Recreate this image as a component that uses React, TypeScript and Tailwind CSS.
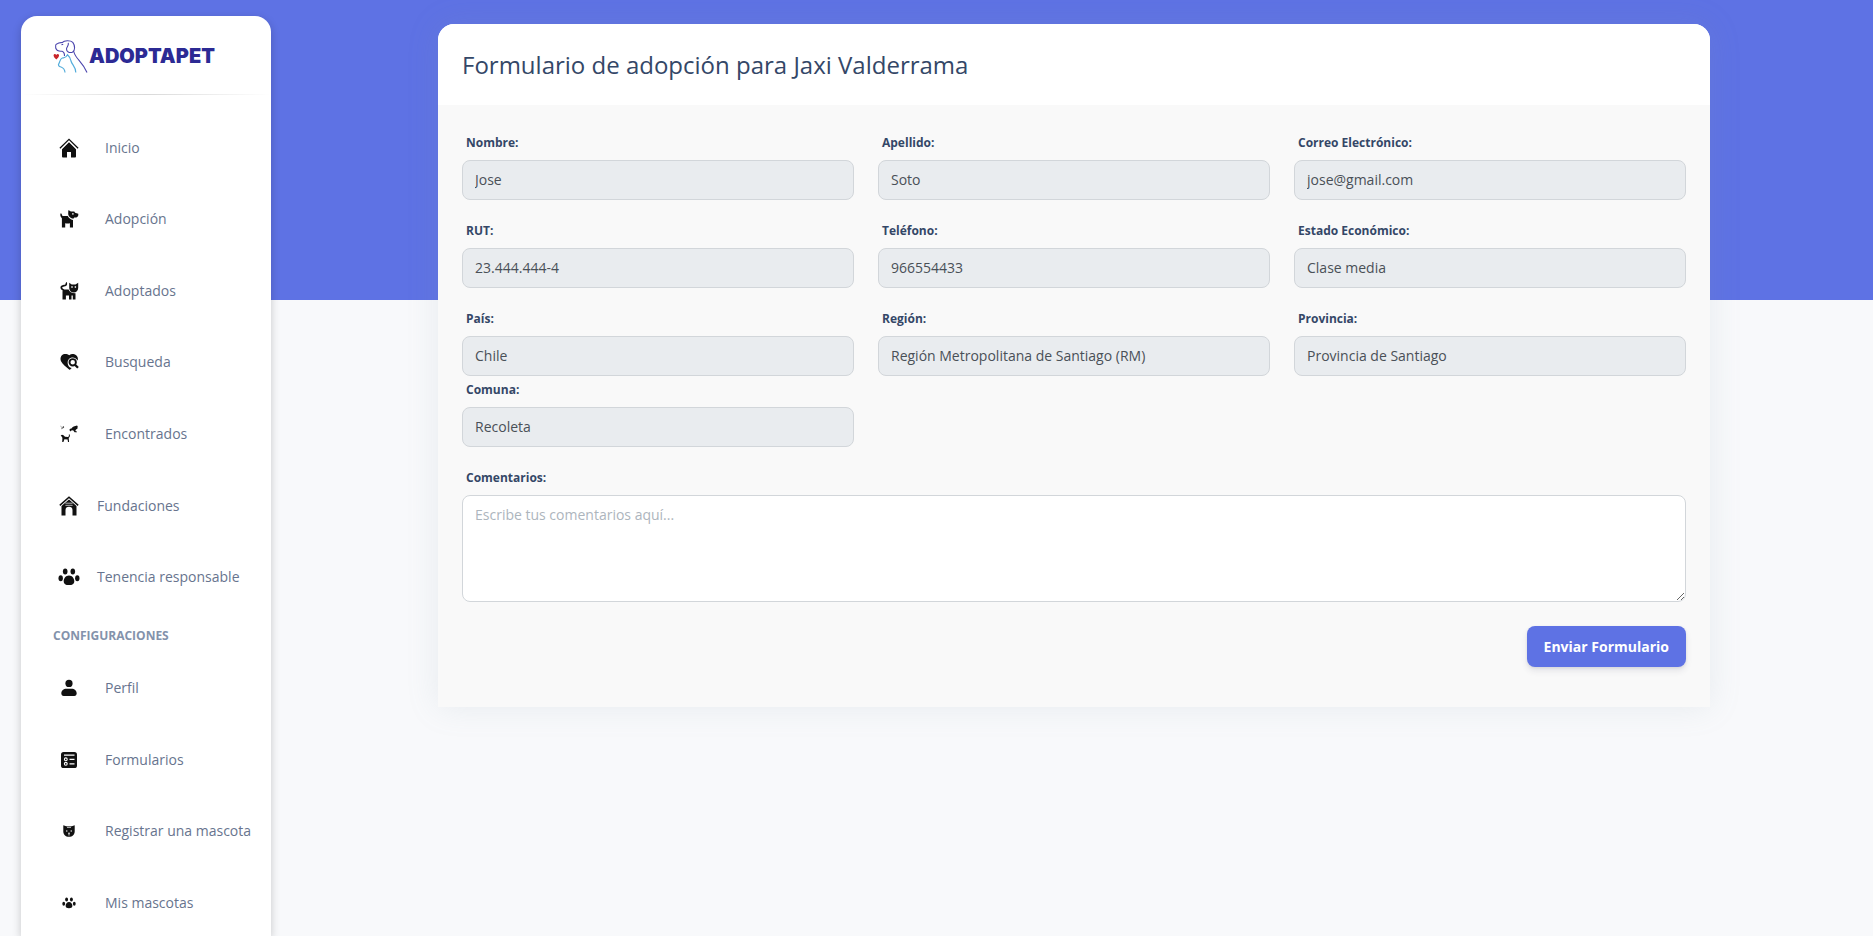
import type { ReactNode } from "react";

function HomeIcon() {
  return (
    <svg width="20" height="20" viewBox="0 0 20 20" fill="none" aria-hidden="true">
      <path d="M.9 10.300 10 1.300l9.100 9" stroke="#111" strokeWidth="1.300" />
      <path d="M10 4.200 3 11.200v7.400c0 .6.300.9.900.9H8V14h4v5.500h4.100c.6 0 .9-.3.9-.9v-7.400z" fill="#111" />
    </svg>
  );
}

function DogIcon() {
  return (
    <svg width="19" height="18" viewBox="0 0 19 18" fill="#111" aria-hidden="true">
      <path d="M.4 3.500c.900-.2 1.400.3 1.500 1.200.2.900.6 1.300 1.400 1.300h4.500c1 2.200 2.800 3.500 5.200 3.900v7.600H9.900v-4.300c-1.300.4-3 .4-4.700 0v4.300H1.900V8.200C.7 7.300 0 5.500.4 3.500z" />
      <path d="M8.300.3c1.200.1 1.800.6 2.300 1.300h3.100c.7 0 1 .5 1.300 1.200l3.300 1c.3 1.900-.6 3.700-2.500 3.800h-1.600l-.9 1.200C10.700 8.500 8.600 6.800 8.200 4.300z" />
      <circle cx="12.900" cy="3.900" r=".8" fill="#fff" />
    </svg>
  );
}

function CatIcon() {
  return (
    <svg width="19" height="18" viewBox="0 0 19 18" fill="none" aria-hidden="true">
      <path d="M7 .9c-.7 0-.6 1-.9 1.800C5.600 4.200 1.300 3 1.300 5.600c0 1.600 1.400 2.200 2.700 2.600" stroke="#111" strokeWidth="1.700" />
      <path
        d="M2.500 9.500c0-1.200.8-2 2-2h4.100c.8 2.500 3.200 3.900 6.900 3.800v6.200h-2.700v-4h-1.300v4H9v-4H5.900v4H2.500z"
        fill="#111"
      />
      <path d="M9.200.7 11.700 2.500h3.800L18.200.7v5.300c0 2.700-2 4.500-4.500 4.500S9.200 8.700 9.200 6z" fill="#111" />
      <path d="M11.300 4.300h1.400v1.400h-1.400zM14.700 4.300h1.400v1.400h-1.400z" fill="#fff" />
    </svg>
  );
}

function HeartSearchIcon() {
  return (
    <svg width="19" height="18" viewBox="0 0 19 18" fill="none" aria-hidden="true">
      <path
        d="M9.300 2.200C7.600.9 5.200.6 3.400 1.200 1 2.200-.2 5.200.9 8c1.300 3.300 5.300 5.900 8.200 8.600.6.500 1.200.2 1.600-.5l1-1C6.800 14 6 6.500 11 4.800c2.500-.8 5 .2 6.600 2.600 1-2.700-.5-5.400-3.200-6.100-2-.5-3.700-.3-5.100.9z"
        fill="#111"
      />
      <circle cx="12.700" cy="9.300" r="3.200" stroke="#111" strokeWidth="1.900" />
      <path d="m15 11.700 3 3.100" stroke="#111" strokeWidth="2.200" />
    </svg>
  );
}

function FoundIcon() {
  return (
    <svg width="18" height="18" viewBox="0 0 18 18" fill="#111" aria-hidden="true">
      <path d="M.5 1.200 2 2.500M1 3.800l2-.6M3.500 1l-1 2 1.600-.6" stroke="#555" strokeWidth=".6" />
      <path d="M9.300 5c.6-1.200 1.500-1.300 2.200-1.400 1-1.400 1.800-2.300 3-2.300L17 .5l.7.8-.3 2.400-1.400.7-.7 1.500 1.500.6.200.7h-2.400l-1.500-1.900-1.800.1-.6 1.100z" />
      <path d="M.7 10.400 2 9.800l1.500.5L5 11.800l3 .1c1.300-.5.900-1.600.8-2.400l.6-.2c.6.800.8 2-.1 3l-.6.7.4 3.900H8l-.4-2.400-3.200-.2-1 2.800H2.200l.2-4L2 12z" />
    </svg>
  );
}

function KennelIcon() {
  return (
    <svg width="20" height="20" viewBox="0 0 20 20" fill="none" aria-hidden="true">
      <path d="M.8 9.400 10 1.300l9.200 8.100" stroke="#111" strokeWidth="1.500" />
      <path d="M10 3.500 2.500 9.900V19.500h4v-5.200a3.500 3.500 0 0 1 7 0v5.200h4V9.900z" fill="#111" />
      <path d="M6.400 7.200h7.200M6.400 9.300h7.200" stroke="#fff" strokeWidth=".7" />
    </svg>
  );
}

function PawIcon({ size }: { size: number }) {
  return (
    <svg width={size} height={size} viewBox="0 0 22 22" fill="#111" aria-hidden="true">
      <ellipse cx="7.200" cy="5.500" rx="2.300" ry="3" />
      <ellipse cx="14.800" cy="5.500" rx="2.300" ry="3" />
      <ellipse cx="2.700" cy="12.200" rx="2.200" ry="3" />
      <ellipse cx="19.300" cy="12.200" rx="2.200" ry="3" />
      <path d="M11 9.400c3.200 0 5.300 3 5.300 5.800 0 2.900-2.300 3.900-5.300 3.900s-5.300-1-5.300-3.900c0-2.800 2.100-5.800 5.300-5.800z" />
    </svg>
  );
}

function PersonIcon() {
  return (
    <svg width="18" height="18" viewBox="0 0 18 18" fill="#111" aria-hidden="true">
      <circle cx="9" cy="4.400" r="3.600" />
      <path d="M6.500 9.700h5c3 0 5.200 2 5.200 4.600 0 1.600-.9 2.600-2.400 2.600H3.700c-1.500 0-2.400-1-2.400-2.600 0-2.600 2.200-4.600 5.200-4.600z" />
    </svg>
  );
}

function FormIcon() {
  return (
    <svg width="18" height="18" viewBox="0 0 18 18" fill="none" aria-hidden="true">
      <rect x="1" y="1" width="16" height="16" rx="2.600" fill="#111" />
      <path d="M4 4.200h10.500M9.500 8.300h5M9.500 12.800h5" stroke="#fff" strokeWidth="1.200" />
      <circle cx="5.800" cy="8.300" r="1.400" stroke="#fff" strokeWidth="1.100" />
      <circle cx="5.800" cy="12.800" r="1.400" stroke="#fff" strokeWidth="1.100" />
    </svg>
  );
}

function PetFaceIcon() {
  return (
    <svg width="12" height="12" viewBox="0 0 12 12" fill="none" aria-hidden="true">
      <path d="M.3.300 3.200 1.300h5.600L11.700.300V6.500C11.700 9.500 9.500 11.800 6 11.800S.3 9.500.3 6.500z" fill="#111" />
      <path d="M4 2.300h4" stroke="#fff" strokeWidth=".8" />
      <circle cx="3.800" cy="6" r=".7" fill="#fff" />
      <circle cx="8.200" cy="6" r=".7" fill="#fff" />
      <path d="M4.900 7.700h2.200L6.400 9v1.600h-.8V9z" fill="#fff" />
    </svg>
  );
}

function LogoMark() {
  return (
    <svg width="36" height="34" viewBox="0 0 36 34" fill="none" aria-hidden="true">
      <path
        d="M11.500 17c.1-3.300-.6-4.200-2.500-4.800-3 .3-5.400-.8-6.200-2.900-.2-1.800-.8-3.600.8-4.200C5 3.800 7 3.600 9.500 3.400c1.500-2 8-2.300 10.300 0 2.200 3 2.700 8.300-.4 9.900-3.300.8-5.900-.6-5.900-3.400.1-2 2.500-3.200 1.800-6M20.800 12.500c1.500 7.500 8.700 10 13.200 21"
        stroke="#4b45ad"
        strokeWidth="1.100"
      />
      <path d="M8.500 5.800 10.200 5.200" stroke="#4b45ad" strokeWidth="1.100" />
      <path
        d="M12 33.500c-.2-3-1-4.500-4-5.500-2.200-.6-3.300-2-2-3.500 1-2 .8-4.500 3.300-5.500 2-.4 3.500.4 5.200-3.200 1.800 1.600 3 3.200 3.500 6.200 1 4 5 6 4.800 11.500"
        stroke="#55addb"
        strokeWidth="1.200"
      />
      <path d="M3.300 20.500C1.500 18.800.3 17.500.6 16c.4-1.300 2-1.300 2.700 0 .7-1.300 2.300-1.300 2.700 0 .3 1.500-.9 2.800-2.700 4.500z" fill="#c9252b" />
    </svg>
  );
}

type Item = { label: string; icon: ReactNode; tight?: boolean };

const mainItems: Item[] = [
  { label: "Inicio", icon: <HomeIcon /> },
  { label: "Adopción", icon: <DogIcon /> },
  { label: "Adoptados", icon: <CatIcon /> },
  { label: "Busqueda", icon: <HeartSearchIcon /> },
  { label: "Encontrados", icon: <FoundIcon /> },
  { label: "Fundaciones", icon: <KennelIcon />, tight: true },
  { label: "Tenencia responsable", icon: <PawIcon size={22} />, tight: true },
];

const settingsItems: Item[] = [
  { label: "Perfil", icon: <PersonIcon /> },
  { label: "Formularios", icon: <FormIcon /> },
  { label: "Registrar una mascota", icon: <PetFaceIcon /> },
  { label: "Mis mascotas", icon: <PawIcon size={14} /> },
];

function NavItem({ label, icon, tight }: Item) {
  return (
    <li className="flex">
      <a
        href="#"
        className={`flex flex-1 items-center whitespace-nowrap pl-8 text-sm text-[#67748e] ${tight ? "gap-3" : "gap-5"}`}
      >
        <span className="flex w-8 shrink-0 justify-center">{icon}</span>
        {label}
      </a>
    </li>
  );
}

function Field({ id, label, value }: { id: string; label: string; value: string }) {
  return (
    <div>
      <label htmlFor={id} className="mb-1 ml-1 block text-xs leading-[27px] font-bold text-[#344767]">
        {label}
      </label>
      <input
        id={id}
        readOnly
        defaultValue={value}
        className="block h-10 w-full rounded-lg border border-[#d2d6da] bg-[#e9ecef] px-3 pb-0.5 text-sm text-[#495057] outline-none"
      />
    </div>
  );
}

export default function App() {
  return (
    <div className="flex min-h-screen items-start bg-[linear-gradient(to_bottom,#5e72e4_300px,#f8f9fb_300px)] font-['Open_Sans',sans-serif]">
      <aside className="sticky top-4 mt-4 mr-1 ml-[21px] h-[calc(100vh-16px)] w-[250px] shrink-0 overflow-hidden rounded-t-2xl bg-white shadow-[0_3px_10px_rgba(0,0,0,0.2)]">
        <a href="#" className="flex h-[78px] items-center pt-0.5 pl-8">
          <LogoMark />
          <span className="font-['Inter',sans-serif] text-xl font-black text-[#2c2a94]">ADOPTAPET</span>
        </a>
        <hr className="h-px border-0 bg-linear-to-r from-transparent via-black/15 to-transparent" />
        <nav className="pt-[17px]">
          <ul className="grid h-[501px] grid-rows-7">
            {mainItems.map((item) => (
              <NavItem key={item.label} {...item} />
            ))}
          </ul>
          <h6 className="mt-[13px] mb-1.5 pl-8 text-xs leading-5 font-bold text-[#8392ab] uppercase">Configuraciones</h6>
          <ul className="grid h-[287px] grid-rows-4">
            {settingsItems.map((item) => (
              <NavItem key={item.label} {...item} />
            ))}
          </ul>
        </nav>
      </aside>

      <main className="flex-1 px-4 py-6">
        <section className="mx-auto max-w-[1272px] rounded-t-2xl bg-[#f9f9f9] shadow-[0_0_32px_rgba(136,152,170,0.15)]">
          <header className="rounded-t-2xl bg-white p-6">
            <h1 className="text-2xl leading-[33px] font-medium text-[#344767]">
              Formulario de adopción para Jaxi Valderrama
            </h1>
          </header>
          <form className="px-6 pt-6 pb-10" onSubmit={(e) => e.preventDefault()}>
            <div className="grid grid-cols-3 gap-x-6 gap-y-[17px]">
              <Field id="nombre" label="Nombre:" value="Jose" />
              <Field id="apellido" label="Apellido:" value="Soto" />
              <Field id="correo" label="Correo Electrónico:" value="jose@gmail.com" />
              <Field id="rut" label="RUT:" value="23.444.444-4" />
              <Field id="telefono" label="Teléfono:" value="966554433" />
              <Field id="estado" label="Estado Económico:" value="Clase media" />
              <Field id="pais" label="País:" value="Chile" />
              <Field id="region" label="Región:" value="Región Metropolitana de Santiago (RM)" />
              <Field id="provincia" label="Provincia:" value="Provincia de Santiago" />
            </div>
            <div className="grid grid-cols-3 gap-x-6">
              <Field id="comuna" label="Comuna:" value="Recoleta" />
            </div>
            <div className="mt-[17px]">
              <label
                htmlFor="comentarios"
                className="mb-1 ml-1 block text-xs leading-[27px] font-bold text-[#344767]"
              >
                Comentarios:
              </label>
              <textarea
                id="comentarios"
                rows={4}
                placeholder="Escribe tus comentarios aquí..."
                className="block h-[107px] w-full resize-y rounded-lg border border-[#d2d6da] bg-white px-3 py-2 text-sm leading-[22px] text-[#495057] outline-none placeholder:text-[#adb5bd]"
              />
            </div>
            <div className="mt-6 flex justify-end">
              <button
                type="submit"
                className="h-[41px] rounded-lg bg-[#5e72e4] px-[17px] text-sm font-bold text-white shadow-[0_4px_6px_rgba(50,50,93,0.1),0_1px_3px_rgba(0,0,0,0.08)]"
              >
                Enviar Formulario
              </button>
            </div>
          </form>
        </section>
      </main>
    </div>
  );
}
